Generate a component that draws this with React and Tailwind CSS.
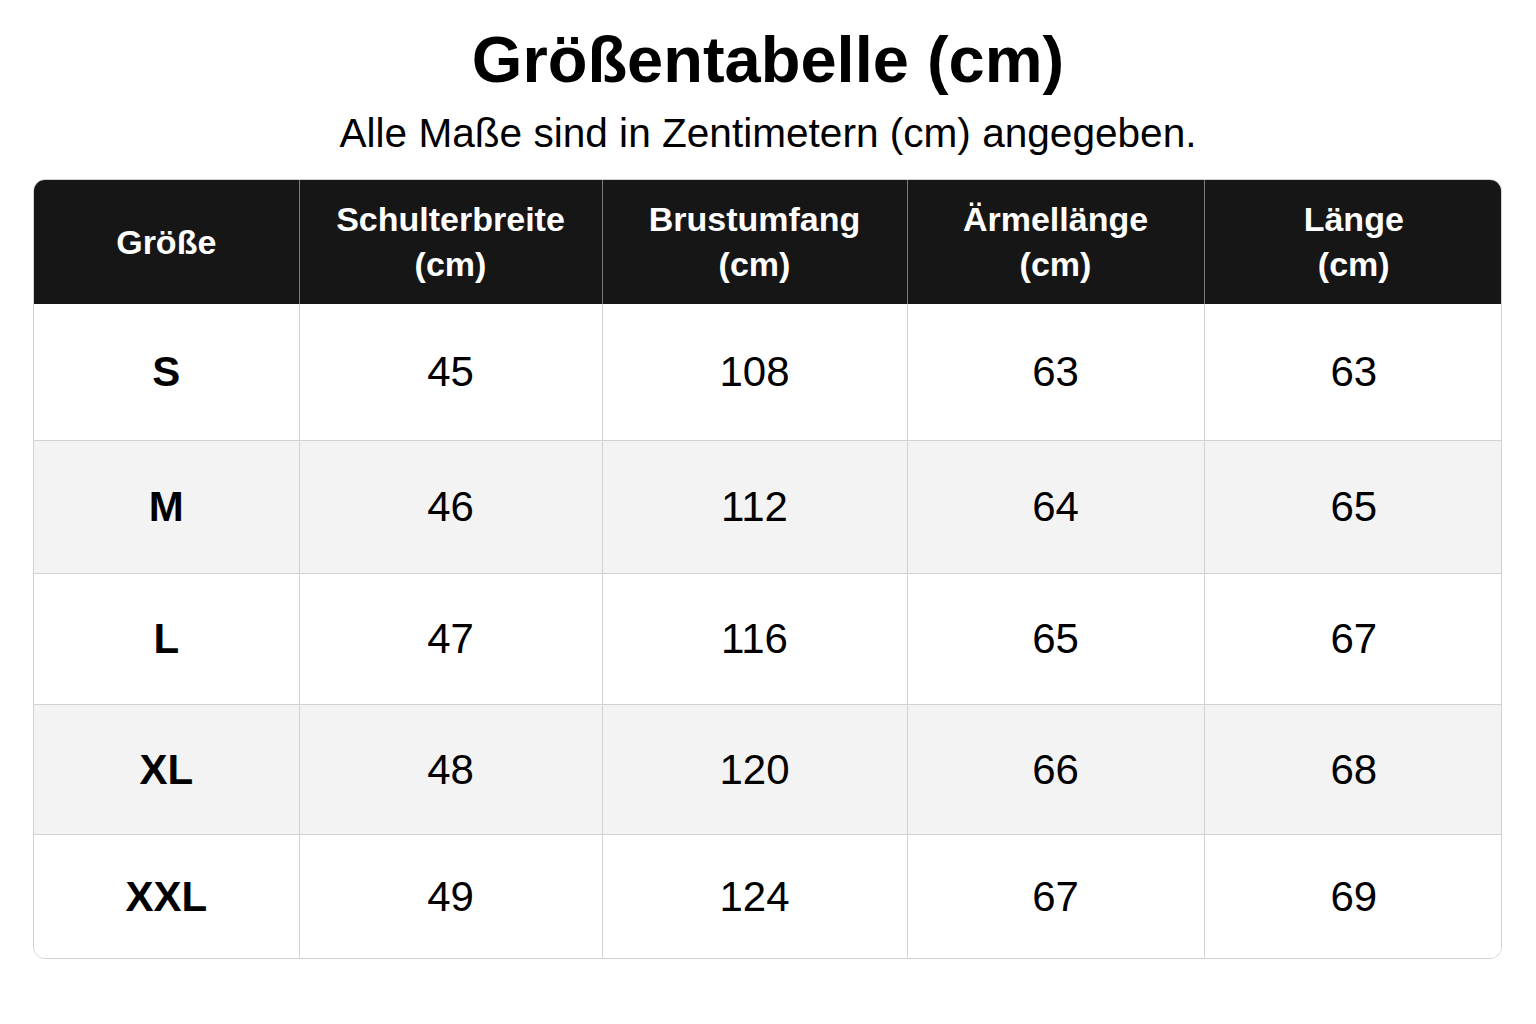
const columns = [
  { label: ['Größe'], width: 'w-[265px]' },
  { label: ['Schulterbreite', '(cm)'], width: 'w-[303px]' },
  { label: ['Brustumfang', '(cm)'], width: 'w-[305px]' },
  { label: ['Ärmellänge', '(cm)'], width: 'w-[297px]' },
  { label: ['Länge', '(cm)'], width: 'w-[299px]' },
]

const rows = [
  { size: 'S', values: [45, 108, 63, 63], h: 'h-[136px]' },
  { size: 'M', values: [46, 112, 64, 65], h: 'h-[133px]' },
  { size: 'L', values: [47, 116, 65, 67], h: 'h-[131px]' },
  { size: 'XL', values: [48, 120, 66, 68], h: 'h-[130px]' },
  { size: 'XXL', values: [49, 124, 67, 69], h: 'h-[124px]' },
]

export default function App() {
  return (
    <div className="min-h-screen bg-white text-black font-['Liberation_Sans',Arial,sans-serif] pt-[22px]">
      {/* Title */}
      <h1 className="text-center text-[65px] leading-[75px] font-bold">
        Größentabelle (cm)
      </h1>
      <p className="mt-[12px] text-center text-[40.6px] leading-[48px]">
        Alle Maße sind in Zentimetern (cm) angegeben.
      </p>

      {/* Table */}
      <div className="ml-[33px] mt-[22px] w-[1469px] rounded-xl border border-[#d2d2d2] overflow-hidden">
        <table className="w-full table-fixed border-collapse">
          <thead>
            <tr className="h-[124px] bg-[#161616]">
              {columns.map((col, i) => (
                <th
                  key={i}
                  className={`${col.width} ${i > 0 ? 'border-l border-[#7a7a7a]' : ''} text-center align-middle text-white text-[34px] leading-[45px] font-bold`}
                >
                  {col.label.map((line) => (
                    <div key={line}>{line}</div>
                  ))}
                </th>
              ))}
            </tr>
          </thead>
          <tbody>
            {rows.map((row, r) => (
              <tr
                key={row.size}
                className={`${row.h} ${r % 2 === 1 ? 'bg-[#f3f3f3]' : 'bg-white'} ${r > 0 ? 'border-t border-[#d2d2d2]' : ''}`}
              >
                <td className="text-center align-middle text-[42px] font-bold">{row.size}</td>
                {row.values.map((v, i) => (
                  <td key={i} className="border-l border-[#d2d2d2] text-center align-middle text-[42px]">
                    {v}
                  </td>
                ))}
              </tr>
            ))}
          </tbody>
        </table>
      </div>
    </div>
  )
}
